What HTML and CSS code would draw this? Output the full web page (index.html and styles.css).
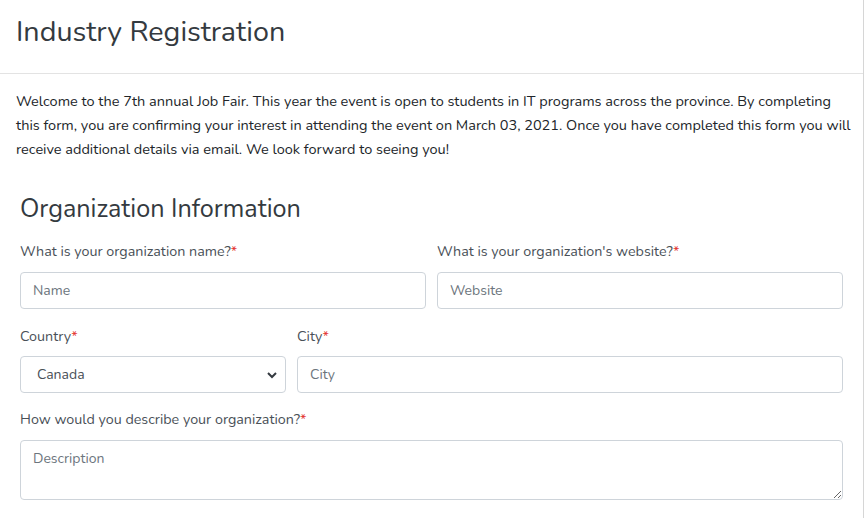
FILE: index.html
```html
<!DOCTYPE html>
<html lang="en">
<head>
<meta charset="utf-8">
<title>Industry Registration</title>
<link rel="stylesheet" href="styles.css">
</head>
<body>
<div class="card">
  <div class="card-header">
    <h1 class="title">Industry Registration</h1>
  </div>
  <div class="card-body">
    <p class="intro">Welcome to the 7th annual Job Fair. This year the event is open to students in IT programs across the province. By completing this form, you are confirming your interest in attending the event on March 03, 2021. Once you have completed this form you will receive additional details via email. We look forward to seeing you!</p>
    <section class="section">
      <h2 class="section-title">Organization Information</h2>
      <div class="row half">
        <div class="field">
          <label class="label">What is your organization name?<span class="req">*</span></label>
          <input class="control" type="text" placeholder="Name">
        </div>
        <div class="field">
          <label class="label">What is your organization's website?<span class="req">*</span></label>
          <input class="control" type="text" placeholder="Website">
        </div>
      </div>
      <div class="row third">
        <div class="field">
          <label class="label">Country<span class="req">*</span></label>
          <div class="select-wrap">
            <select class="control select">
              <option>Canada</option>
            </select>
            <svg class="chev" width="10" height="8" viewBox="0 0 10 8"><path d="M1 2 L5 6 L9 2" fill="none" stroke="#343a40" stroke-width="2"/></svg>
          </div>
        </div>
        <div class="field">
          <label class="label">City<span class="req">*</span></label>
          <input class="control" type="text" placeholder="City">
        </div>
      </div>
      <div class="row full">
        <div class="field">
          <label class="label">How would you describe your organization?<span class="req">*</span></label>
          <textarea class="control area" placeholder="Description"></textarea>
        </div>
      </div>
    </section>
  </div>
</div>
</body>
</html>
```
FILE: styles.css
```css
* { box-sizing: border-box; }
html, body { margin: 0; padding: 0; background: #fff; }
body {
  font-family: "Nunito", "Lato", "Open Sans", sans-serif;
  font-size: 14.5px;
  line-height: 24px;
  color: #212529;
}
.card {
  width: 864px;
  border-right: 1px solid #d6d6d6;
  background: #fff;
}
.card-header {
  height: 74px;
  padding: 14px 16px 0;
  border-bottom: 1px solid #e3e3e3;
}
.title {
  margin: 0;
  font-size: 28.7px;
  font-weight: 400;
  line-height: 36px;
  color: #343a40;
}
.card-body {
  padding: 15px 11px 20px 16px;
}
.intro {
  margin: 0 0 33px;
  color: #212529;
}
.section {
  padding: 0 9px 0 4px;
}
.section-title {
  margin: 0 0 15px;
  font-size: 25.2px;
  font-weight: 400;
  line-height: 31px;
  color: #343a40;
}
.row {
  display: grid;
  column-gap: 11px;
  margin-bottom: 15px;
}
.half { grid-template-columns: 1fr 1fr; }
.third { grid-template-columns: 266px 1fr; }
.full { grid-template-columns: 1fr; }
.field { display: flex; flex-direction: column; }
.label {
  display: block;
  margin-bottom: 8px;
  font-size: 14.3px;
  line-height: 24px;
  color: #495057;
}
.third .label { margin-top: 1px; margin-bottom: 7px; }
.req { color: #e3342f; }
.control {
  display: block;
  width: 100%;
  height: 37px;
  padding: 6px 12px;
  font-family: inherit;
  font-size: 14px;
  line-height: 23px;
  color: #495057;
  background: #fff;
  border: 1px solid #ced4da;
  border-radius: 4px;
  outline: none;
}
.control::placeholder { color: #6c757d; opacity: 1; }
.select-wrap { position: relative; }
.select {
  appearance: none;
  -webkit-appearance: none;
  padding-left: 16px;
}
.chev {
  position: absolute;
  right: 9px;
  top: 15px;
  pointer-events: none;
}
.area {
  height: 60px;
  resize: vertical;
}
```
